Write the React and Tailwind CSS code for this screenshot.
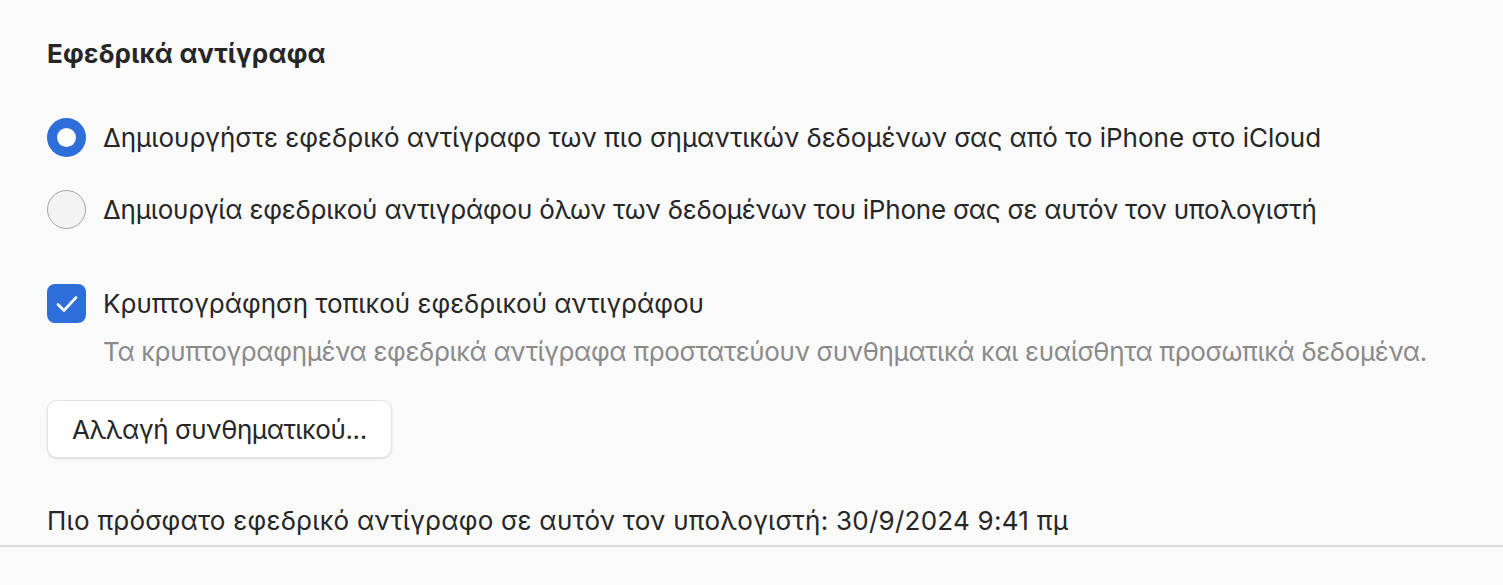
import React, { useState } from 'react';

const Radio = ({ checked, onClick, children }) => (
  <button type="button" onClick={onClick} className="flex items-center gap-[17px] text-left">
    {checked ? (
      <span className="flex h-[39px] w-[39px] items-center justify-center rounded-full bg-[#2e6edb]">
        <span className="h-[19px] w-[19px] rounded-full bg-white" />
      </span>
    ) : (
      <span className="h-[39px] w-[39px] rounded-full border-[1.5px] border-[#a3a3a3] bg-[#f3f3f3]" />
    )}
    <span className="whitespace-nowrap">{children}</span>
  </button>
);

const App = () => {
  const [mode, setMode] = useState('icloud');
  const [encrypt, setEncrypt] = useState(true);

  return (
    <div
      className="min-h-[585px] w-full bg-[#fafafa] text-[26px] text-[#262626]"
      style={{ fontFamily: 'Inter, "Noto Sans", sans-serif' }}
    >
      <div className="px-[47px] pt-[36px]">
        <h2 className="text-[26px] font-bold leading-[36px] tracking-[0.2px]">Εφεδρικά αντίγραφα</h2>

        <div className="mt-[46px] flex flex-col gap-[33px] leading-[39px]">
          <Radio checked={mode === 'icloud'} onClick={() => setMode('icloud')}>
            Δημιουργήστε εφεδρικό αντίγραφο των πιο σημαντικών δεδομένων σας από το iPhone στο iCloud
          </Radio>
          <Radio checked={mode === 'local'} onClick={() => setMode('local')}>
            <span className="tracking-[-0.2px]">
              Δημιουργία εφεδρικού αντιγράφου όλων των δεδομένων του iPhone σας σε αυτόν τον υπολογιστή
            </span>
          </Radio>
        </div>

        <button
          type="button"
          onClick={() => setEncrypt(!encrypt)}
          className="mt-[55px] flex items-center gap-[17px] leading-[39px]"
        >
          <span
            className={
              encrypt
                ? 'flex h-[39px] w-[39px] items-center justify-center rounded-[8px] bg-[#2e6edb]'
                : 'h-[39px] w-[39px] rounded-[8px] border-[1.5px] border-[#a3a3a3] bg-[#f3f3f3]'
            }
          >
            {encrypt && (
              <svg width="22" height="18" viewBox="0 0 22 18" fill="none">
                <path d="M2 9.5 L8 15.5 L20 2.5" stroke="white" strokeWidth="2.6" strokeLinecap="round" strokeLinejoin="round" />
              </svg>
            )}
          </span>
          <span>Κρυπτογράφηση τοπικού εφεδρικού αντιγράφου</span>
        </button>
        <p className="ml-[56px] mt-[9px] whitespace-nowrap leading-[39px] tracking-[-0.35px] text-[#8a8a8a]">
          Τα κρυπτογραφημένα εφεδρικά αντίγραφα προστατεύουν συνθηματικά και ευαίσθητα προσωπικά δεδομένα.
        </p>

        <button
          type="button"
          className="mt-[29px] h-[58px] rounded-[10px] border border-[#e2e2e2] bg-white px-[24px] tracking-[-0.4px] shadow-[0_1px_2px_rgba(0,0,0,0.12)]"
        >
          Αλλαγή συνθηματικού...
        </button>

        <p className="mt-[43px] whitespace-nowrap leading-[39px] tracking-[0.25px]">
          Πιο πρόσφατο εφεδρικό αντίγραφο σε αυτόν τον υπολογιστή: 30/9/2024 9:41 πμ
        </p>
      </div>
      <div className="mt-[5px] h-[2px] w-full bg-[#dadada]" />
    </div>
  );
};

export default App;
